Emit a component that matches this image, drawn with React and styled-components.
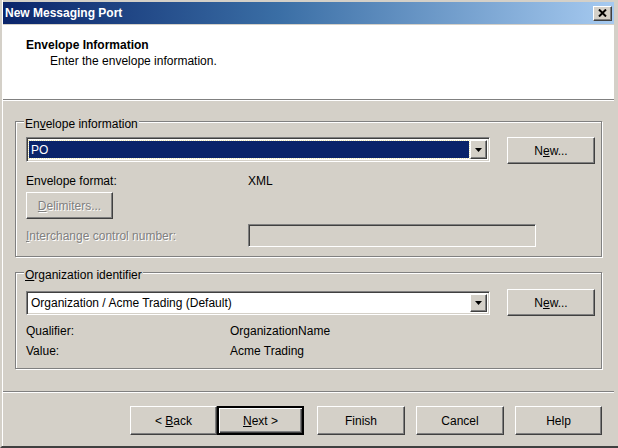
import React from 'react';
import styled, { createGlobalStyle, css } from 'styled-components';

const GlobalStyle = createGlobalStyle`
  html, body {
    margin: 0;
    padding: 0;
    background: #d4d0c8;
  }
  body {
    font-family: "Liberation Sans", Arial, sans-serif;
    font-size: 12px;
    color: #000;
  }
  * {
    box-sizing: border-box;
  }
`;

const raised = css`
  border: 1px solid;
  border-color: #fff #404040 #404040 #fff;
  box-shadow: inset -1px -1px 0 #808080, inset 1px 1px 0 #d4d0c8;
`;

const sunken = css`
  border: 1px solid;
  border-color: #808080 #fff #fff #808080;
  box-shadow: inset 1px 1px 0 #404040, inset -1px -1px 0 #d4d0c8;
`;

const Window = styled.div`
  width: 618px;
  height: 448px;
  background: #d4d0c8;
  display: flex;
  flex-direction: column;
  padding: 2px 4px 0 1px;
  border-left: 2px solid #d4d0c8;
  border-bottom: 2px solid #404040;
  box-shadow: inset 1px 0 0 #fff;
  overflow: hidden;
`;

const TitleBar = styled.div`
  flex: none;
  height: 22px;
  display: flex;
  align-items: center;
  justify-content: space-between;
  padding: 0 2px 0 2px;
  background: linear-gradient(to right, #0a246a 0%, #3a6ea5 45%, #a6caf0 100%);
  color: #fff;
  font-weight: bold;
  font-size: 12px;
`;

const CloseButton = styled.div`
  width: 19px;
  height: 15px;
  background: #d4d0c8;
  ${raised};
  display: flex;
  align-items: center;
  justify-content: center;
`;

const Header = styled.div`
  flex: none;
  height: 75px;
  margin-top: 1px;
  background: #fff;
  padding: 12px 0 0 23px;
  border-bottom: 1px solid #808080;
  box-shadow: 0 1px 0 #fff;
`;

const HeaderTitle = styled.div`
  font-weight: bold;
  line-height: 16px;
`;

const HeaderSub = styled.div`
  line-height: 16px;
  padding-left: 24px;
`;

const Group = styled.fieldset`
  margin: ${(p) => p.$top}px 12px 0;
  padding: ${(p) => p.$pt}px 6px ${(p) => p.$pb}px 10px;
  border: 1px solid #808080;
  box-shadow: inset 1px 1px 0 #fff, 1px 1px 0 #fff;
  min-width: 0;
  display: flex;
  flex-direction: column;
`;

const Legend = styled.legend`
  padding: 6px 1px 0;
  margin-left: -2px;
  line-height: 14px;
  background: linear-gradient(to bottom, transparent 6px, #d4d0c8 6px);
`;

const Row = styled.div`
  display: flex;
  align-items: ${(p) => p.$align || 'center'};
  justify-content: ${(p) => p.$justify || 'flex-start'};
  margin-top: ${(p) => p.$mt || 0}px;
  line-height: 14px;
`;

const Label = styled.span`
  width: ${(p) => p.$w || 222}px;
  flex: none;
  color: ${(p) => (p.$disabled ? '#808080' : '#000')};
  text-shadow: ${(p) => (p.$disabled ? '1px 1px 0 #fff' : 'none')};
`;

const Combo = styled.div`
  width: 464px;
  height: ${(p) => p.$h}px;
  background: #fff;
  ${sunken};
  display: flex;
  padding: 2px;
`;

const ComboText = styled.div`
  flex: 1;
  display: flex;
  align-items: center;
  padding-left: 2px;
  margin: 1px 1px 1px 0;
  background: ${(p) => (p.$selected ? '#0a246a' : '#fff')};
  color: ${(p) => (p.$selected ? '#fff' : '#000')};
  outline: ${(p) => (p.$selected ? '1px dotted #e8e4b0' : 'none')};
`;

const DropButton = styled.div`
  width: 17px;
  flex: none;
  background: #d4d0c8;
  ${raised};
  display: flex;
  align-items: center;
  justify-content: center;
`;

const Button = styled.div`
  width: ${(p) => p.$w || 87}px;
  height: ${(p) => p.$h || 27}px;
  flex: none;
  display: flex;
  align-items: center;
  justify-content: center;
  background: #d4d0c8;
  ${raised};
  color: ${(p) => (p.$disabled ? '#808080' : '#000')};
  text-shadow: ${(p) => (p.$disabled ? '1px 1px 0 #fff' : 'none')};
  ${(p) =>
    p.$default &&
    css`
      border: 2px solid;
      border-color: #000;
      box-shadow: inset 1px 1px 0 #fff, inset -1px -1px 0 #404040, inset -2px -2px 0 #808080;
    `}
`;

const TextBox = styled.div`
  width: 288px;
  height: 23px;
  background: #d4d0c8;
  ${sunken};
`;

const Separator = styled.div`
  flex: none;
  margin-top: 22px;
  border-top: 1px solid #808080;
  border-bottom: 1px solid #fff;
`;

const ButtonRow = styled.div`
  display: flex;
  justify-content: flex-end;
  gap: 11px;
  padding: 13px 12px 0 0;
`;

const Pair = styled.div`
  display: flex;
  margin-right: 2px;
`;

const Arrow = () => (
  <svg width="7" height="4" viewBox="0 0 7 4">
    <path d="M0 0h7L3.5 4z" fill="#000" />
  </svg>
);

const CloseIcon = () => (
  <svg width="9" height="8" viewBox="0 0 9 8">
    <path d="M1 0.5L8 7.5M8 0.5L1 7.5" stroke="#000" strokeWidth="2" />
  </svg>
);

const App = () => (
  <>
    <GlobalStyle />
    <Window>
      <TitleBar>
        <span>New Messaging Port</span>
        <CloseButton>
          <CloseIcon />
        </CloseButton>
      </TitleBar>

      <Header>
        <HeaderTitle>Envelope Information</HeaderTitle>
        <HeaderSub>Enter the envelope information.</HeaderSub>
      </Header>

      <Group $top={11} $pt={6} $pb={9}>
        <Legend>
          En<u>v</u>elope information
        </Legend>
        <Row $align="flex-start" $justify="space-between">
          <Combo $h={25}>
            <ComboText $selected>PO</ComboText>
            <DropButton>
              <Arrow />
            </DropButton>
          </Combo>
          <Button $w={88}>
            <span>
              N<u>e</u>w...
            </span>
          </Button>
        </Row>
        <Row $mt={10}>
          <Label>Envelope format:</Label>
          <span>XML</span>
        </Row>
        <Row $mt={4}>
          <Button $disabled>
            <span>
              <u>D</u>elimiters...
            </span>
          </Button>
        </Row>
        <Row $mt={5}>
          <Label $disabled>
            <u>I</u>nterchange control number:
          </Label>
          <TextBox />
        </Row>
      </Group>

      <Group $top={5} $pt={7} $pb={10}>
        <Legend>
          <u>O</u>rganization identifier
        </Legend>
        <Row $justify="space-between">
          <Combo $h={24}>
            <ComboText>Organization / Acme Trading (Default)</ComboText>
            <DropButton>
              <Arrow />
            </DropButton>
          </Combo>
          <Button $w={88}>
            <span>
              N<u>e</u>w...
            </span>
          </Button>
        </Row>
        <Row $mt={8}>
          <Label $w={204}>Qualifier:</Label>
          <span>OrganizationName</span>
        </Row>
        <Row $mt={6}>
          <Label $w={204}>Value:</Label>
          <span>Acme Trading</span>
        </Row>
      </Group>

      <Separator />

      <ButtonRow>
        <Pair>
          <Button $h={29}>
            <span>
              &lt; <u>B</u>ack
            </span>
          </Button>
          <Button $h={29} $default>
            <span>
              <u>N</u>ext &gt;
            </span>
          </Button>
        </Pair>
        <Button $h={29} $w={88}>Finish</Button>
        <Button $h={29} $w={88}>Cancel</Button>
        <Button $h={29}>Help</Button>
      </ButtonRow>
    </Window>
  </>
);

export default App;
